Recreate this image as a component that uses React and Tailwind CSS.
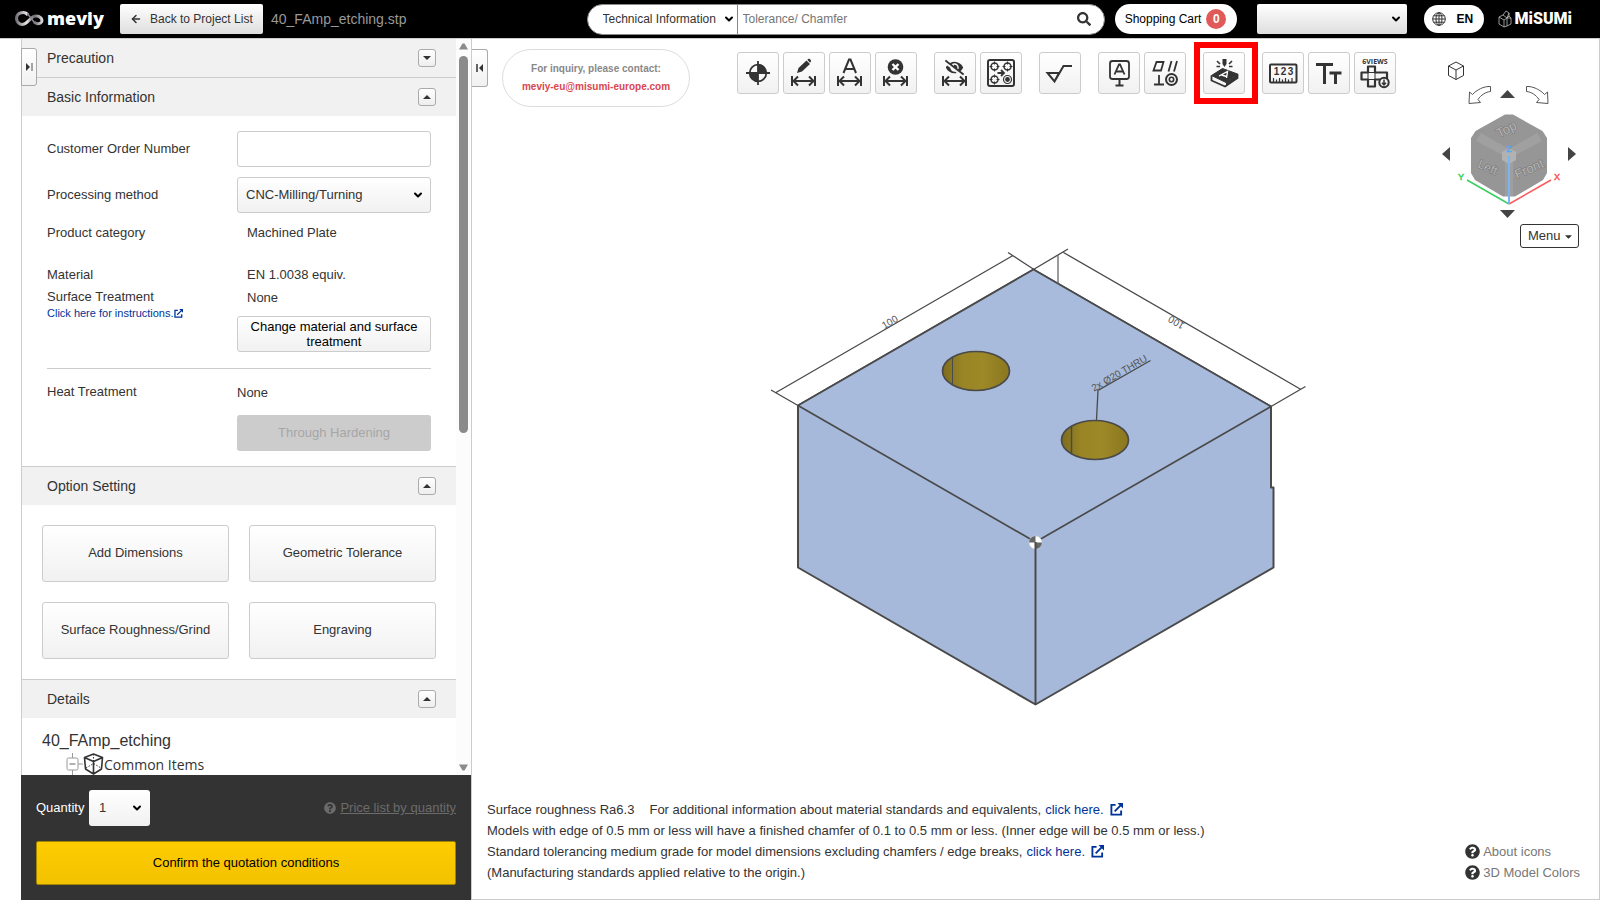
import { useState } from 'react';
import { ArrowLeft, ChevronDown } from 'lucide-react';
import { FaSearch, FaQuestionCircle, FaCaretDown, FaPencilAlt, FaEyeSlash } from 'react-icons/fa';

const NOTE_LINK = 'text-[#003399] hover:underline';

function ExternalIcon({ className }) {
  return (
    <svg viewBox="0 0 14 14" className={className} fill="none" stroke="currentColor" strokeWidth="2" aria-hidden="true">
      <path d="M6 2H1.5v10.5H12V8" />
      <path d="M5 9l6.5-6.5" />
      <path d="M8 0h6v6z" fill="currentColor" stroke="none" />
    </svg>
  );
}

function SelectBox({ label, className, wrapper, chevron, children, ...rest }) {
  return (
    <div className={`relative ${wrapper}`}>
      <select aria-label={label} className={`w-full h-full appearance-none outline-none ${className}`} {...rest}>
        {children}
      </select>
      <ChevronDown
        size={12}
        strokeWidth={4}
        className={`absolute top-1/2 -translate-y-1/2 pointer-events-none text-black ${chevron}`}
      />
    </div>
  );
}

function MeviyLogo() {
  return (
    <a href="#home" className="flex items-center gap-0.5 ml-[15px] w-[90px] text-white">
      <svg viewBox="0 0 30 16" className="w-[30px] h-4 shrink-0" aria-hidden="true">
        <defs>
          <linearGradient id="swoosh" x1="0" x2="1">
            <stop offset="0" stopColor="#77737a" />
            <stop offset="0.4" stopColor="#e8e6ea" />
            <stop offset="0.7" stopColor="#6d6a70" />
            <stop offset="1" stopColor="#d8d6da" />
          </linearGradient>
        </defs>
        <path
          d="M13 4C10 0 2 1 1.500 7C1.500 13 7 15 11 12C15 9 17 5 21 5C25 5 28 8 26.500 11C25 13.500 21 13 19 11"
          fill="none"
          stroke="url(#swoosh)"
          strokeWidth="3"
        />
        <path d="M12 2.500C15 5 16 8 20 12" fill="none" stroke="#8a878d" strokeWidth="1.500" />
      </svg>
      <span className="font-['Open_Sans','Noto_Sans',sans-serif] font-extrabold text-[18px] leading-5 pb-0.5">meviy</span>
    </a>
  );
}

function MisumiLogo() {
  return (
    <a href="#misumi" className="flex items-center gap-[3px] ml-3.5 mr-7 text-white">
      <svg viewBox="0 0 14 18" className="w-3.5 h-[18px]" fill="none" stroke="#bbb" strokeWidth="0.8" aria-hidden="true">
        <path d="M1 7l4-2 4 3v8l-3 1-5-3zM1 7l5 3 3-2M6 10v7M5 5l3-4 3 2-2 5M11 3v3l2 2v6l-4 2M9 8l4 0M11 6l-2 2" />
      </svg>
      <span className="font-['Roboto',sans-serif] font-black text-[16px] leading-5">MiSUMi</span>
    </a>
  );
}

function Header({ fileName }) {
  return (
    <header className="flex items-center shrink-0 h-[39px] bg-black border-b border-[#ccc]">
      <MeviyLogo />
      <button className="flex items-center gap-2 ml-[15px] h-[30px] w-[143px] pl-2.5 rounded-[2px] bg-linear-to-b from-white to-[#dedede] text-[12px] text-[#333] whitespace-nowrap">
        <ArrowLeft size={12} strokeWidth={3} />
        Back to Project List
      </button>
      <span className="ml-2 text-[14px] text-[#999]">{fileName}</span>

      <form className="flex items-center ml-auto w-[518px] h-[31px] rounded-full bg-white border border-[#888] overflow-hidden">
        <SelectBox
          label="Search category"
          wrapper="w-[150px] h-full border-r border-[#888]"
          className="pl-[15px] text-[12px] text-[#333]"
          chevron="right-0.5"
        >
          <option>Technical Information</option>
        </SelectBox>
        <input
          type="text"
          aria-label="Search"
          placeholder="Tolerance/ Chamfer"
          className="flex-1 h-full px-[5px] text-[12px] outline-none placeholder:text-[#757575]"
        />
        <button type="button" aria-label="Run search" className="mr-[13px] text-[#333]">
          <FaSearch size={14} />
        </button>
      </form>

      <button className="flex items-center justify-center gap-[5px] ml-2.5 w-[122px] h-[30px] rounded-full bg-white text-[12px] text-black whitespace-nowrap">
        Shopping Cart
        <span className="flex items-center justify-center w-5 h-5 rounded-full bg-[#e05a5a] text-white font-bold">0</span>
      </button>

      <SelectBox
        label="Account"
        wrapper="ml-5 w-[150px] h-[30px]"
        className="rounded-[2px] bg-linear-to-b from-white to-[#dedede] px-2 text-[12px]"
        chevron="right-[5px]"
      >
        <option></option>
      </SelectBox>

      <button className="flex items-center gap-[11px] ml-[17px] w-[60px] h-7 pl-2 rounded-full bg-white text-[12px] font-bold text-black">
        <svg viewBox="0 0 14 14" className="w-3.5 h-3.5" fill="none" stroke="#333" aria-hidden="true">
          <circle cx="7" cy="7" r="6.300" />
          <ellipse cx="7" cy="7" rx="3" ry="6.300" />
          <path d="M7 .7v12.600M.7 7h12.600M1.500 3.800h11M1.500 10.200h11" />
        </svg>
        EN
      </button>
      <MisumiLogo />
    </header>
  );
}

function Section({ title, open, onToggle, first, children }) {
  return (
    <section>
      <div
        className={`flex items-center justify-between pl-[25px] pr-5 bg-[#f1f1f1] ${
          first ? 'h-[38px]' : 'h-[39px] border-t border-[#ccc]'
        }`}
      >
        <h2 className="text-[14px] text-[#333]">{title}</h2>
        <button
          aria-label={`Toggle ${title}`}
          aria-expanded={open}
          onClick={onToggle}
          className="flex items-center justify-center w-[18px] h-[18px] rounded-[3px] border border-[#aaa] bg-linear-to-b from-white to-[#eee]"
        >
          <svg viewBox="0 0 8 4" className="w-2 h-1" fill="#333" aria-hidden="true">
            <path d={open ? 'M0 4l4-4 4 4z' : 'M0 0l4 4 4-4z'} />
          </svg>
        </button>
      </div>
      {open && children}
    </section>
  );
}

function BasicInformation() {
  return (
    <div className="pl-[25px] pr-[25px] pt-[15px] pb-[15px] text-[13px] text-[#333]">
      <div className="grid grid-cols-[190px_1fr] items-center">
        <label htmlFor="order-number">Customer Order Number</label>
        <input id="order-number" type="text" className="h-9 px-2 rounded-[3px] border border-[#ccc] bg-white outline-none" />
      </div>
      <div className="grid grid-cols-[190px_1fr] items-center mt-2.5">
        <span>Processing method</span>
        <SelectBox
          label="Processing method"
          wrapper="h-9"
          className="pl-2 rounded-[3px] border border-[#ccc] bg-linear-to-b from-white to-[#f1f1f1]"
          chevron="right-[7px]"
        >
          <option>CNC-Milling/Turning</option>
        </SelectBox>
      </div>
      <div className="grid grid-cols-[190px_1fr] mt-2.5 leading-5">
        <span>Product category</span>
        <span className="pl-2.5">Machined Plate</span>
      </div>
      <div className="grid grid-cols-[190px_1fr] mt-[22px] leading-5">
        <span>Material</span>
        <span className="pl-2.5">EN 1.0038 equiv.</span>
      </div>
      <div className="grid grid-cols-[190px_1fr] mt-[3px]">
        <div>
          <p className="leading-[18px]">Surface Treatment</p>
          <a href="#instructions" className="flex items-center text-[11px] leading-[14px] text-[#003399]">
            Click here for instructions.
            <ExternalIcon className="w-[9px] h-[9px]" />
          </a>
        </div>
        <div>
          <p className="pl-2.5 leading-5">None</p>
          <button className="mt-2 w-full h-9 rounded-[3px] border border-[#ccc] bg-linear-to-b from-white to-[#f1f1f1] leading-[15px] text-black">
            Change material and surface treatment
          </button>
        </div>
      </div>
      <hr className="mt-4 border-[#ccc]" />
      <div className="grid grid-cols-[190px_1fr] mt-3.5">
        <p className="leading-[18px]">Heat Treatment</p>
        <div>
          <p className="leading-5">None</p>
          <button disabled className="mt-3 w-full h-9 rounded-[3px] bg-[#ccc] text-[#a6a6a6]">
            Through Hardening
          </button>
        </div>
      </div>
    </div>
  );
}

function OptionSetting() {
  const options = ['Add Dimensions', 'Geometric Tolerance', 'Surface Roughness/Grind', 'Engraving'];
  return (
    <div className="grid grid-cols-2 gap-5 p-5">
      {options.map((name) => (
        <button
          key={name}
          className="h-[57px] rounded-[3px] border border-[#ccc] bg-linear-to-b from-white to-[#f1f1f1] pb-0.5 text-[13px] text-[#333]"
        >
          {name}
        </button>
      ))}
    </div>
  );
}

function Details() {
  return (
    <div className="pl-5 pt-[13px] text-[#333]">
      <p className="text-[16px] leading-5">40_FAmp_etching</p>
      <div className="flex items-center mt-[3px] pl-6 h-5">
        <svg viewBox="0 0 38 22" className="w-[38px] h-[22px] shrink-0" fill="none" aria-hidden="true">
          <path d="M6.500 0v5M6.500 17v5M12 11h5" stroke="#999" />
          <rect x="1" y="5" width="11" height="12" rx="1.500" stroke="#999" />
          <path d="M3.500 11h6" stroke="#999" strokeWidth="1.500" />
          <path
            d="M18.500 4.500L27.500 1l9 3.500-1 11.500-8 5-8-5zM18.500 4.500l9 4 9-4M27.500 8.500V21"
            stroke="#333"
            strokeWidth="1.600"
            strokeLinejoin="round"
          />
          <path d="M20 15l7.500-4.500L35 15M27.500 1v8" stroke="#333" strokeDasharray="1.500 1.500" />
        </svg>
        <span className="font-['Open_Sans','Noto_Sans',sans-serif] text-[14px]">Common Items</span>
      </div>
    </div>
  );
}

function Sidebar() {
  const [open, setOpen] = useState({ precaution: false, basic: true, option: true, details: true });
  const toggle = (key) => setOpen((prev) => ({ ...prev, [key]: !prev[key] }));

  return (
    <aside className="relative flex flex-col shrink-0 ml-[21px] w-[451px] border-r border-[#ccc]">
      <div className="flex flex-1 min-h-0 border-l border-[#ccc] overflow-hidden">
        <div className="flex-1">
          <Section title="Precaution" first open={open.precaution} onToggle={() => toggle('precaution')} />
          <Section title="Basic Information" open={open.basic} onToggle={() => toggle('basic')}>
            <BasicInformation />
          </Section>
          <Section title="Option Setting" open={open.option} onToggle={() => toggle('option')}>
            <OptionSetting />
          </Section>
          <Section title="Details" open={open.details} onToggle={() => toggle('details')}>
            <Details />
          </Section>
        </div>
        <div className="flex flex-col items-center w-[15px] py-1 bg-[#fcfcfc]">
          <svg viewBox="0 0 9 7" className="w-[9px] h-[7px]" fill="#8b8b8b" aria-hidden="true">
            <path d="M0 6.500L3.500 .5h2L9 6.500z" />
          </svg>
          <div className="mt-1.5 h-[377px] w-[9px] rounded-full bg-[#8b8b8b]" />
          <svg viewBox="0 0 9 7" className="mt-auto w-[9px] h-[7px]" fill="#8b8b8b" aria-hidden="true">
            <path d="M0 .5h9L5.500 6.500h-2z" />
          </svg>
        </div>
      </div>

      <div className="p-[15px] bg-[#333] text-[13px]">
        <div className="flex items-center">
          <span className="text-white w-[53px]">Quantity</span>
          <SelectBox
            label="Quantity"
            wrapper="w-[61px] h-9"
            className="pl-2.5 rounded-[3px] bg-linear-to-b from-white to-[#f1f1f1] text-[#333]"
            chevron="right-[7px]"
          >
            <option>1</option>
            <option>2</option>
          </SelectBox>
          <a href="#prices" className="flex items-center gap-1 ml-auto text-[#6b6b6b]">
            <FaQuestionCircle size={12} />
            <span className="underline">Price list by quantity</span>
          </a>
        </div>
        <button className="mt-[15px] w-full h-11 rounded-[2px] border border-[#a38600] bg-linear-to-b from-[#ffcc00] to-[#f2c200] text-black">
          Confirm the quotation conditions
        </button>
      </div>

      <button
        aria-label="Expand panel"
        className="absolute left-0 top-[9px] flex items-center justify-center w-4 h-[38px] rounded-r-[3px] border border-[#aaa] bg-linear-to-b from-white to-[#f1f1f1]"
      >
        <svg viewBox="0 0 7 8" className="w-[7px] h-2" aria-hidden="true">
          <path d="M0 0l4 4-4 4z" fill="#333" />
          <path d="M6 0v8" stroke="#888" strokeWidth="1.500" />
        </svg>
      </button>
    </aside>
  );
}

/* Toolbar glyphs share a 40x40 grid */
function Dimension() {
  return <path d="M9 24v10M32 24v10M10 29h21M15 24.500l-4.500 4.500 4.500 4.500M26 24.500l4.500 4.500-4.500 4.500" strokeWidth="2" />;
}

const ICONS = {
  origin: (
    <>
      <circle cx="21" cy="21" r="8.300" strokeWidth="1.800" />
      <path d="M21 9v24M9 21h24" strokeWidth="1.800" />
      <path d="M21 21V12.500A8.500 8.500 0 0 1 29.500 21zM21 21v8.500A8.500 8.500 0 0 1 12.500 21z" fill="#333" stroke="none" />
    </>
  ),
  edit: (
    <>
      <path d="M14 21l1.500-5 8-7.500 3.500 3.500-8 7.500zM24.300 7.800l1-.9c1-.8 3.500 1.500 2.600 2.700l-.9 1.200z" fill="#333" stroke="none" />
      <Dimension />
    </>
  ),
  letter: (
    <>
      <path d="M14.500 21l5.500-13.500h1.500L27 21M16.500 17h8.500" strokeWidth="2" />
      <Dimension />
    </>
  ),
  remove: (
    <>
      <circle cx="20.500" cy="15" r="7.800" fill="#333" stroke="none" />
      <path d="M17.500 12l6 6M23.500 12l-6 6" stroke="#fff" strokeWidth="2.400" />
      <Dimension />
    </>
  ),
  hide: (
    <>
      <FaEyeSlash x="11" y="6" size={19} fill="#333" stroke="none" />
      <Dimension />
    </>
  ),
  pattern: (
    <>
      <rect x="8" y="8" width="26" height="26" rx="2" strokeWidth="2" />
      <circle cx="14.500" cy="14.500" r="3.500" strokeWidth="1.500" />
      <circle cx="27.500" cy="14.500" r="3.500" strokeWidth="1.500" />
      <circle cx="14.500" cy="27.500" r="3.500" strokeWidth="1.500" />
      <circle cx="27.500" cy="27.500" r="4" strokeWidth="1.200" />
      <circle cx="27.500" cy="27.500" r="2.400" fill="#333" stroke="none" />
      <path d="M14.500 9.500v3M14.500 16.500v3M9.500 14.500h3M16.500 14.500h3M27.500 9.500v3M27.500 16.500v3M22.500 14.500h3M29.500 14.500h3M14.500 22.500v3M14.500 29.500v3M9.500 27.500h3M16.500 27.500h3" strokeWidth="1" />
      <path d="M17.500 21h6M21 18l3 3-3 3" strokeWidth="1.800" />
    </>
  ),
  roughness: <path d="M8.500 21h11.500L15.500 29.500zM15.500 29.500l9-15.500H33" strokeWidth="2" />,
  label: (
    <>
      <rect x="12" y="9" width="19" height="18" rx="2.500" strokeWidth="1.800" />
      <path d="M16.500 22.500l4.500-10h1l4.500 10M18 19.500h7" strokeWidth="1.800" />
      <path d="M21.500 27v6M17.500 33.500h8" strokeWidth="2" />
    </>
  ),
  geometric: (
    <>
      <path d="M9.500 18.500L12.500 10h7L17 18.500zM24.500 19.500l3-10.500M30 19.500l3-10.500" strokeWidth="1.800" />
      <path d="M15 23v9M10 32.500h10" strokeWidth="1.800" />
      <circle cx="27.500" cy="27.500" r="5.500" strokeWidth="2" />
      <circle cx="27.500" cy="27.500" r="2.200" strokeWidth="1.600" />
    </>
  ),
  engrave: (
    <>
      <path d="M8.500 23.500L19.500 16.500l15 5.500-11.500 8.500z" fill="#333" strokeWidth="1" strokeLinejoin="round" />
      <path d="M8.500 23.500v5l13.500 6 12.500-8.500v-4" strokeWidth="1.800" strokeLinejoin="round" />
      <path d="M23 30.500v4l11.500-8.500v-4z" fill="#333" stroke="none" />
      <path d="M16 24l8.500-4.500-1 6.500M18.500 23l5 1.500" stroke="#fff" strokeWidth="1.400" />
      <path d="M19.500 7h4v5l-2 3-2-3z" fill="#333" stroke="none" />
      <path d="M14 9l3 3M29 9l-3 3M13.500 14.500h3.500M29.500 14.500h-3.500" strokeWidth="1.600" />
    </>
  ),
  ruler: (
    <>
      <rect x="8" y="12.500" width="26.500" height="18" rx="1" strokeWidth="2" />
      <g fontSize="10" fontWeight="700" fill="#333" stroke="none" textAnchor="middle">
        <text x="14.500" y="23">1</text>
        <text x="21.500" y="23">2</text>
        <text x="28.500" y="23">3</text>
      </g>
      <path d="M11.500 30v-4M14.500 30v-2.500M17.500 30v-4M20.500 30v-2.500M23.500 30v-4M26.500 30v-2.500M30 30v-4" strokeWidth="1.200" />
    </>
  ),
  text: <path d="M8 12.500h17M16.500 12v20M21.500 21h12M27.500 20v12" strokeWidth="3" />,
  views: (
    <>
      <text x="21" y="11.500" textAnchor="middle" fontSize="7" fontWeight="700" fontFamily="Open Sans, Noto Sans, sans-serif" fill="#333" stroke="none">
        6VIEWS
      </text>
      <path d="M14 14.500h7v6h12v7H21v7h-7v-7H7.500v-7H14z" strokeWidth="2.200" strokeLinejoin="round" />
      <path d="M14 20.500h7v7h-7z" strokeWidth="1" />
      <circle cx="30" cy="30.500" r="4.700" fill="#f4f4f4" strokeWidth="2" />
      <path d="M30 27.500v5M28 30.800l2 2.200 2-2.200" strokeWidth="1.500" />
    </>
  ),
};

const TOOL_GROUPS = [
  [
    { id: 'origin', title: 'Set origin' },
    { id: 'edit', title: 'Edit dimension' },
    { id: 'letter', title: 'Name dimension' },
    { id: 'remove', title: 'Delete dimension' },
  ],
  [
    { id: 'hide', title: 'Hide dimensions' },
    { id: 'pattern', title: 'Group holes' },
  ],
  [{ id: 'roughness', title: 'Surface roughness' }],
  [
    { id: 'label', title: 'Datum' },
    { id: 'geometric', title: 'Geometric tolerance' },
  ],
  [{ id: 'engrave', title: 'Engraving', highlight: true }],
  [
    { id: 'ruler', title: 'Measure' },
    { id: 'text', title: 'Text size' },
    { id: 'views', title: 'Six views' },
  ],
];

function Toolbar() {
  return (
    <div className="flex gap-[17px] shrink-0">
      {TOOL_GROUPS.map((group) => (
        <div key={group[0].id} className="flex gap-1">
          {group.map((tool) => (
            <div key={tool.id} className="relative">
              <button
                title={tool.title}
                aria-label={tool.title}
                className="block w-[42px] h-[42px] rounded-[3px] border border-[#ccc] bg-linear-to-b from-white to-[#f1f1f1]"
              >
                <svg viewBox="1 1 40 40" className="w-10 h-10" fill="none" stroke="#333" aria-hidden="true">
                  {ICONS[tool.id]}
                </svg>
              </button>
              {tool.highlight && (
                <span className="absolute -left-[9px] -right-[13px] -inset-y-2.5 border-6 border-[#ff0000] pointer-events-none" />
              )}
            </div>
          ))}
        </div>
      ))}
    </div>
  );
}

function NavCube() {
  return (
    <div className="relative w-[144px] h-[166px]">
      <svg viewBox="0 0 144 166" className="w-full h-full" aria-hidden="true">
        <path d="M67 56.500h8L104.500 73l4.500 7v35l-4 7-28 16.500H65L37 122l-4-7V80l4.500-7z" fill="#969696" />
        <path d="M43 75l27 15.500-6.500 6L38 83zM99 75L72 90.500l6.500 6L104 83z" fill="#a0a0a0" />
        <path d="M67 104h8v34h-8z" fill="#9f9f9f" />
        <path d="M71 90l7 4v8l-7 4-7-4v-8z" fill="#b2b2b2" />
        <g
          fill="#b4b4b4"
          stroke="#7c7c7c"
          strokeWidth="1.200"
          paintOrder="stroke"
          fontFamily="Liberation Sans, Arial, sans-serif"
        >
          <text transform="translate(61 80) rotate(-27)" fontSize="13">Top</text>
          <text transform="translate(39 109) rotate(24)" fontSize="12">Left</text>
          <text transform="translate(79 121) rotate(-24)" fontSize="13">Front</text>
        </g>
        <path d="M71 146L29 122" stroke="#3bcf62" strokeWidth="1.500" />
        <path d="M71 146l42-24" stroke="#fb5a5a" strokeWidth="1.500" />
        <path d="M71 146V98" stroke="#78b5f2" strokeWidth="2" />
        <g fontSize="9" textAnchor="middle" fontFamily="Liberation Sans, Arial, sans-serif">
          <text x="23" y="122" fill="#3bcf62" stroke="#3bcf62" strokeWidth="0.500">Y</text>
          <text x="119" y="122" fill="#fb5a5a" stroke="#fb5a5a" strokeWidth="0.500">X</text>
          <text x="71" y="94" fill="#5aa5ee" stroke="#5aa5ee" strokeWidth="0.500">Z</text>
        </g>
      </svg>
      <button aria-label="Home view" className="absolute left-[10px] top-[3px]">
        <svg viewBox="0 0 16 20" className="w-4 h-5" fill="none" stroke="#333" aria-hidden="true">
          <path d="M8 1l7.500 4v9.500L8 18.500.5 14.500V5zM.5 5L8 9l7.500-4M8 9v9.500" />
        </svg>
      </button>
      <button aria-label="Rotate left" className="absolute left-[30px] top-[27px]">
        <svg viewBox="0 0 23 20" className="w-[23px] h-5" fill="none" stroke="#555" aria-hidden="true">
          <path d="M22.500 1.500v5C17.500 7 13 10 10 14.500l2.500 3L1 18.500 1.500 7l3 2.500C8.500 5 16 1 22.500 1.500z" />
        </svg>
      </button>
      <button aria-label="Rotate right" className="absolute left-[88px] top-[27px]">
        <svg viewBox="0 0 23 20" className="w-[23px] h-5" fill="none" stroke="#555" aria-hidden="true">
          <path d="M.5 1.500v5C5.500 7 10 10 13 14.500l-2.500 3L22 18.500 21.500 7l-3 2.500C14.500 5 7 1 .5 1.500z" />
        </svg>
      </button>
      <button aria-label="Tilt up" className="absolute left-[62px] top-8">
        <svg viewBox="0 0 15 8" className="w-[15px] h-2" fill="#444" aria-hidden="true">
          <path d="M0 8l7.500-8L15 8z" />
        </svg>
      </button>
      <button aria-label="Tilt down" className="absolute left-[62px] top-[152px]">
        <svg viewBox="0 0 15 8" className="w-[15px] h-2" fill="#444" aria-hidden="true">
          <path d="M0 0l7.500 8L15 0z" />
        </svg>
      </button>
      <button aria-label="Turn left" className="absolute left-1 top-[89px]">
        <svg viewBox="0 0 8 14" className="w-2 h-3.5" fill="#444" aria-hidden="true">
          <path d="M8 0v14L0 7z" />
        </svg>
      </button>
      <button aria-label="Turn right" className="absolute left-[130px] top-[89px]">
        <svg viewBox="0 0 8 14" className="w-2 h-3.5" fill="#444" aria-hidden="true">
          <path d="M0 0v14l8-7z" />
        </svg>
      </button>
    </div>
  );
}

function Model() {
  return (
    <svg viewBox="764 244 544 466" className="w-[544px] h-[466px] max-w-full" fill="none" stroke="#4a4a4a" role="img" aria-label="3D model">
      <defs>
        <linearGradient id="bore" x1="0" x2="1">
          <stop offset="0" stopColor="#7d6c1d" />
          <stop offset="0.3" stopColor="#9a8526" />
          <stop offset="0.6" stopColor="#9e8928" />
          <stop offset="1" stopColor="#8a771f" />
        </linearGradient>
      </defs>
      {/* body */}
      <path d="M1033.500 269.500L1271 406.500V487.500H1273.500V567.500L1035.500 704.500 798 567.500V405.500z" fill="#a7b9da" strokeWidth="2" strokeLinejoin="round" />
      <path d="M1033.500 269.500L1271 406.500 1035.500 542 798 405.500z" fill="#a9bbdc" strokeWidth="1.700" strokeLinejoin="round" />

      {/* holes */}
      <ellipse cx="976" cy="371" rx="33.500" ry="19.500" fill="url(#bore)" strokeWidth="1.700" />
      <path d="M952.500 357.500v27" />
      <ellipse cx="1095" cy="440" rx="33.500" ry="19.500" fill="url(#bore)" strokeWidth="1.700" />
      <path d="M1071.500 426.500v27" strokeWidth="1.500" />

      {/* origin marker */}
      <circle cx="1035.500" cy="542.500" r="6.500" fill="#fff" stroke="#ccc" strokeWidth="0.500" />
      <path d="M1035.500 542.500v-6.500a6.500 6.500 0 0 0-6.500 6.500zM1035.500 542.500v6.500a6.500 6.500 0 0 0 6.500-6.500z" fill="#666" stroke="none" />
      <path d="M1035.500 542v162" strokeWidth="2" />

      {/* dimensions */}
      <g strokeWidth="1.300">
        <path d="M771 390l27 15.500M776 392.500L1013 255.500M1008 252.500l26 17" />
        <path d="M1068 249l-34.500 20.500M1063.500 252.500L1301 389.500M1305.500 386.500L1271 406.500" />
        <path d="M1096.500 420l1.500-29.500 52.500-30" />
      </g>
      <path d="M1058 255v28.500" stroke="#666" strokeWidth="1.300" />
      <g fill="#555" stroke="none" fontFamily="Liberation Sans, Arial, sans-serif" textAnchor="middle">
        <text transform="translate(891.500 325) rotate(-30)" fontSize="10">100</text>
        <text transform="translate(1178 319.500) rotate(210)" fontSize="10">100</text>
        <text transform="translate(1121 376) rotate(-30)" fontSize="10">2x Ø20 THRU</text>
      </g>
    </svg>
  );
}

function Viewer() {
  return (
    <main className="relative flex flex-col flex-1 min-w-0 border-r border-b border-[#ccc]">
      <div className="flex items-start pt-2.5">
        <button
          aria-label="Collapse panel"
          className="flex items-center justify-center w-4 h-[38px] rounded-r-[3px] border border-l-0 border-[#aaa] bg-linear-to-b from-white to-[#f1f1f1]"
        >
          <svg viewBox="0 0 7 8" className="w-[7px] h-2" aria-hidden="true">
            <path d="M7 0L3 4l4 4z" fill="#333" />
            <path d="M1 0v8" stroke="#333" strokeWidth="1.500" />
          </svg>
        </button>
        <div className="flex flex-col items-center justify-center shrink-0 ml-3.5 w-[188px] h-[58px] rounded-full border border-[#ddd] font-bold text-[10px] leading-[18px] whitespace-nowrap">
          <p className="text-[#888]">For inquiry, please contact:</p>
          <a href="mailto:meviy-eu@misumi-europe.com" className="text-[#d9464f]">
            meviy-eu@misumi-europe.com
          </a>
        </div>
        <div className="pl-[47px] pt-[3px]">
          <Toolbar />
        </div>
      </div>

      <div className="absolute right-[17px] top-[19px] flex flex-col items-end">
        <NavCube />
        <button className="flex items-center justify-between mr-[3px] w-[59px] h-6 pl-[7px] pr-1 rounded-[3px] border border-[#333] bg-white text-[13px] text-[#333]">
          Menu
          <FaCaretDown size={11} />
        </button>
      </div>

      <div className="flex flex-1 items-center justify-center min-h-0 pt-12">
        <Model />
      </div>

      <div className="flex items-end justify-between pl-[15px] pr-[19px] pb-4 text-[13px] text-[#333]">
        <div className="leading-[21px]">
          <p className="flex items-center">
            Surface roughness Ra6.3
            <span className="ml-[15px]">For additional information about material standards and equivalents,</span>
            <a href="#standards" className={`flex items-center gap-1.5 ml-1 ${NOTE_LINK}`}>
              click here.
              <ExternalIcon className="w-[13px] h-[13px]" />
            </a>
          </p>
          <p>
            Models with edge of 0.5 mm or less will have a finished chamfer of 0.1 to 0.5 mm or less. (Inner edge will be
            0.5 mm or less.)
          </p>
          <p className="flex items-center">
            Standard tolerancing medium grade for model dimensions excluding chamfers / edge breaks,
            <a href="#tolerances" className={`flex items-center gap-1.5 ml-1 ${NOTE_LINK}`}>
              click here.
              <ExternalIcon className="w-[13px] h-[13px]" />
            </a>
          </p>
          <p>(Manufacturing standards applied relative to the origin.)</p>
        </div>
        <ul className="leading-[21px] text-[#777]">
          <li>
            <a href="#icons" className="flex items-center gap-[3px]">
              <FaQuestionCircle size={15} className="text-[#333]" />
              About icons
            </a>
          </li>
          <li>
            <a href="#colors" className="flex items-center gap-[3px]">
              <FaQuestionCircle size={15} className="text-[#333]" />
              3D Model Colors
            </a>
          </li>
        </ul>
      </div>
    </main>
  );
}

export default function App() {
  return (
    <div className="flex flex-col h-screen bg-white font-['Liberation_Sans',Arial,sans-serif]">
      <Header fileName="40_FAmp_etching.stp" />
      <div className="flex flex-1 min-h-0">
        <Sidebar />
        <Viewer />
      </div>
    </div>
  );
}
